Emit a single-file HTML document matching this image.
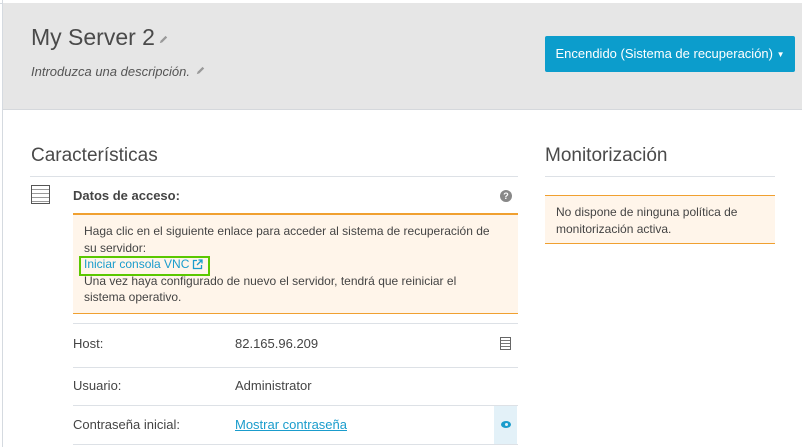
<!DOCTYPE html>
<html><head><meta charset="utf-8"><style>
body{margin:0;width:802px;height:447px;overflow:hidden;background:#fff;font-family:"Liberation Sans",sans-serif;color:#444;position:relative}
.a{position:absolute;white-space:nowrap}
.hl{position:absolute;height:1px;background:#dde1e6}
</style></head><body>
<div class="a" style="left:0;top:0;width:802px;height:3px;background:#fff;border-bottom:1px solid #d5dae0"></div>
<div class="a" style="left:2px;top:0;width:1px;height:447px;background:#d5dae0"></div>
<div class="a" style="left:3px;top:3px;width:799px;height:106px;background:#e6e6e6;border-bottom:1px solid #d5d8dc"></div>
<div class="a" style="left:31px;top:24px;font-size:23px;color:#4a4a4a">My Server 2</div>
<svg class="a" style="left:159px;top:35px" width="9" height="9" viewBox="0 0 11 11"><path d="M1 10 L2 7 L8 1 L10 3 L4 9 Z" fill="#999"/></svg>
<div class="a" style="left:31px;top:64px;font-size:13px;font-style:italic;color:#555">Introduzca una descripción.</div>
<svg class="a" style="left:196px;top:66px" width="9" height="9" viewBox="0 0 11 11"><path d="M1 10 L2 7 L8 1 L10 3 L4 9 Z" fill="#999"/></svg>
<div class="a" style="left:545px;top:36px;width:250px;height:36px;background:#0c9dcc;border-radius:2px;color:#fff;font-size:13px;line-height:36px;text-align:center">Encendido (Sistema de recuperación) <span style="font-size:8px;vertical-align:1px">▼</span></div>

<div class="a" style="left:31px;top:145px;font-size:19px;color:#4a4a4a">Características</div>
<div class="hl" style="left:30px;top:176px;width:488px"></div>
<div class="a" style="left:545px;top:145px;font-size:19px;color:#4a4a4a">Monitorización</div>
<div class="hl" style="left:545px;top:176px;width:230px"></div>

<div class="a" style="left:31px;top:185px;width:17px;height:17px;border:1px solid #555;background:repeating-linear-gradient(#fff 0 3px,#999 3px 4px)"></div>
<div class="a" style="left:73px;top:188px;font-size:13px;font-weight:bold;color:#444">Datos de acceso:</div>
<div class="a" style="left:500px;top:190px;width:12px;height:12px;border-radius:50%;background:#888;color:#fff;font-size:9px;font-weight:bold;text-align:center;line-height:12px">?</div>

<div class="a" style="left:73px;top:213px;width:445px;height:98px;background:#fff5ea;border-top:2px solid #f0a030;border-bottom:1px solid #f0a030"></div>
<div class="a" style="left:84px;top:223px;font-size:12px;line-height:16.6px;color:#444">Haga clic en el siguiente enlace para acceder al sistema de recuperación de<br>su servidor:<br><span style="color:#1a9ccc">Iniciar consola VNC</span><br>Una vez haya configurado de nuevo el servidor, tendrá que reiniciar el<br>sistema operativo.</div>
<svg class="a" style="left:192px;top:259px" width="11" height="11" viewBox="0 0 11 11"><path d="M5 1.5H1.5V9.5H9.5V6M6.5 1H10V4.5M10 1L5 6" fill="none" stroke="#1a9ccc" stroke-width="1.3"/></svg>
<div class="a" style="left:79px;top:256px;height:16px;border:2px solid #5bc800;width:127px"></div>

<div class="hl" style="left:73px;top:323px;width:445px"></div>
<div class="hl" style="left:73px;top:367px;width:445px"></div>
<div class="hl" style="left:73px;top:405px;width:445px"></div>
<div class="hl" style="left:73px;top:444px;width:445px"></div>
<div class="a" style="left:73px;top:336px;font-size:13px">Host:</div>
<div class="a" style="left:235px;top:336px;font-size:13px">82.165.96.209</div>
<div class="a" style="left:500px;top:337px;width:9px;height:11px;border:1px solid #666;background:repeating-linear-gradient(#fff 0 2px,#777 2px 3px)"></div>
<div class="a" style="left:73px;top:378px;font-size:13px">Usuario:</div>
<div class="a" style="left:235px;top:378px;font-size:13px">Administrator</div>
<div class="a" style="left:73px;top:417px;font-size:13px">Contraseña inicial:</div>
<div class="a" style="left:235px;top:417px;font-size:13px;color:#1a9ccc;text-decoration:underline">Mostrar contraseña</div>
<div class="a" style="left:494px;top:406px;width:23px;height:38px;background:#e3f1f8"></div>
<div class="a" style="left:501px;top:421px;width:10px;height:7px;border-radius:50%;background:#1a9ccc"></div>
<div class="a" style="left:505px;top:423px;width:3px;height:3px;border-radius:50%;background:#e3f1f8"></div>

<div class="a" style="left:545px;top:195px;width:230px;height:47px;background:#fff5ea;border-top:1px solid #f0a030;border-bottom:1px solid #f0a030"></div>
<div class="a" style="left:556px;top:204px;font-size:12px;line-height:16.5px;color:#444">No dispone de ninguna política de<br>monitorización activa.</div>
</body></html>
